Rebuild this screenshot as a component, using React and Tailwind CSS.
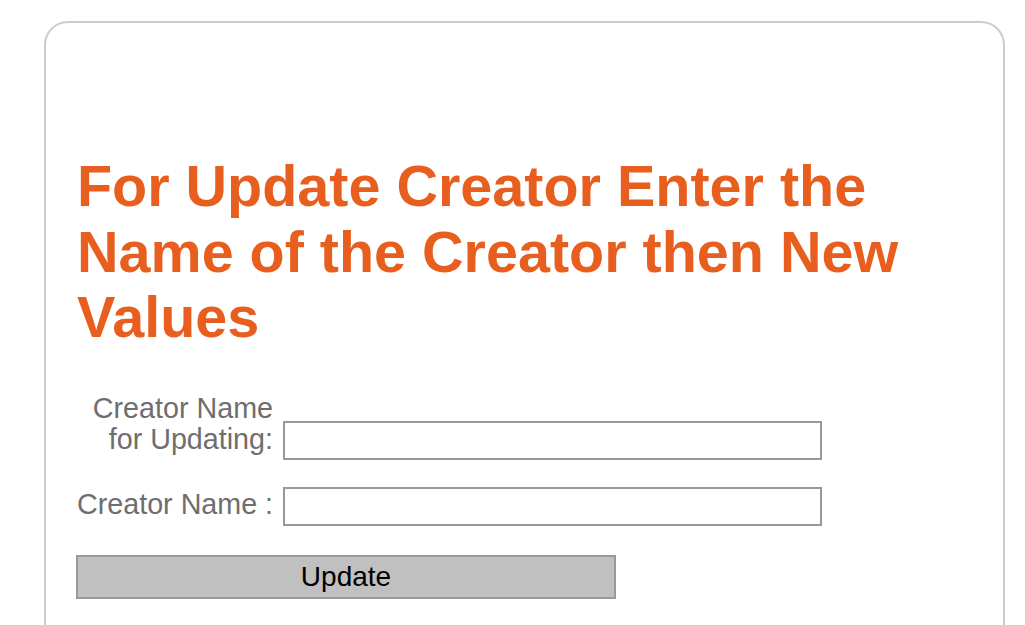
import React, { useState } from "react";

const App = () => {
  const [oldName, setOldName] = useState("");
  const [newName, setNewName] = useState("");

  return (
    <div className="h-screen overflow-hidden bg-white pt-[21px] pl-[44px] font-['Liberation_Sans',Arial,sans-serif]">
      {/* main card */}
      <div className="w-[961px] h-[700px] border-2 border-[#cccccc] rounded-[24px] pt-[131px] px-[31px]">
        <h1 className="text-[57.5px] leading-[65.5px] font-bold text-[#e85e1f]">
          For Update Creator Enter the Name of the Creator then New Values
        </h1>

        {/* form */}
        <div className="mt-[42px] flex flex-col">
          <div className="flex items-end gap-[10px]">
            <label className="w-[196px] shrink-0 text-right text-[28.7px] leading-[31px] text-[#6e6e6e] pb-[5px]">
              Creator Name
              <br />
              for Updating:
            </label>
            <input
              type="text"
              value={oldName}
              onChange={(e) => setOldName(e.target.value)}
              className="w-[539px] h-[39px] border-2 border-[#999999] bg-white outline-none px-1 text-[20px]"
            />
          </div>

          <div className="mt-[27px] flex items-start gap-[10px]">
            <label className="w-[196px] shrink-0 whitespace-nowrap text-right text-[28.7px] leading-[31px] text-[#6e6e6e] pt-[2px]">
              Creator Name :
            </label>
            <input
              type="text"
              value={newName}
              onChange={(e) => setNewName(e.target.value)}
              className="w-[539px] h-[39px] border-2 border-[#999999] bg-white outline-none px-1 text-[20px]"
            />
          </div>

          <button className="mt-[29px] -ml-[1px] w-[540px] h-[44px] border-2 border-[#999999] bg-[#c0c0c0] text-black text-[28px] leading-none">
            Update
          </button>
        </div>
      </div>
    </div>
  );
};

export default App;
